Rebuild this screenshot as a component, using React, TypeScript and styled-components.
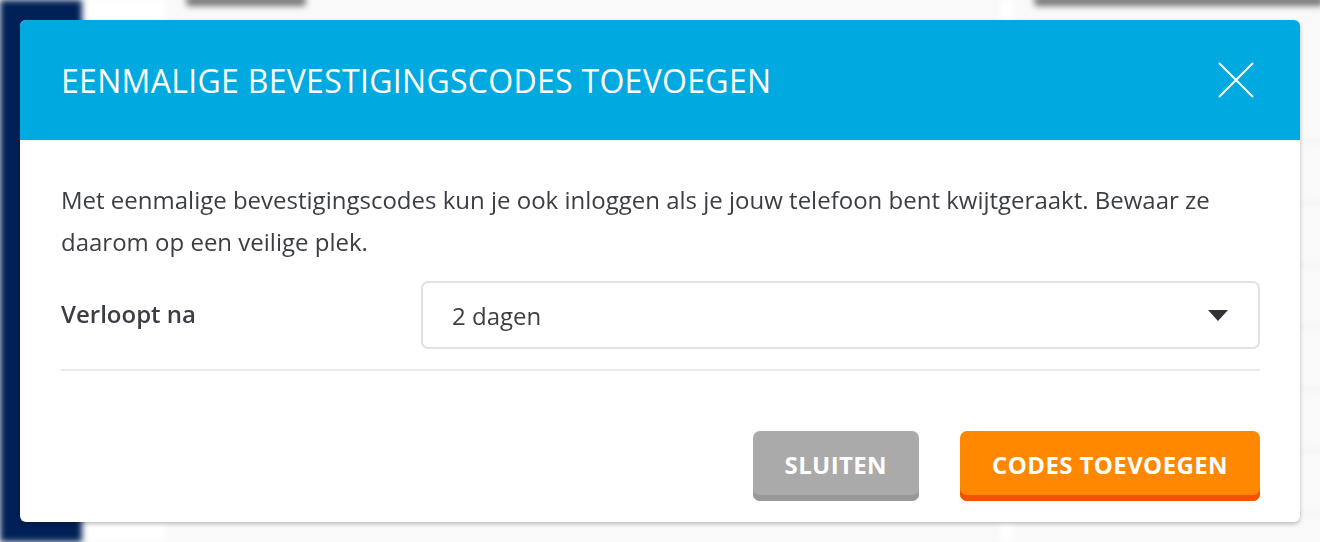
import React, { useState } from 'react';
import styled, { createGlobalStyle } from 'styled-components';

const GlobalStyle = createGlobalStyle`
  html, body {
    margin: 0;
    padding: 0;
    height: 100%;
    overflow: hidden;
  }
  body {
    font-family: 'Open Sans', 'Noto Sans', sans-serif;
    background: #f8f8f8;
  }
`;

const Page = styled.div`
  display: flex;
  height: 542px;
  filter: blur(3px);
`;

const Sidebar = styled.div`
  width: 82px;
  background: #002157;
  flex-shrink: 0;
`;

const Content = styled.div`
  flex: 1;
  display: flex;
  gap: 14px;
  padding-left: 84px;
  background: #fff;
`;

const Card = styled.div<{ $width: number }>`
  width: ${(p) => p.$width}px;
  background: #f9f9f9;
  display: flex;
  flex-direction: column;
`;

const CardRow = styled.div<{ $tall?: boolean }>`
  height: ${(p) => (p.$tall ? 140 : 60)}px;
  border-bottom: 2px solid #ececec;
  padding: 0 20px;
`;

const BlurText = styled.div<{ $width: number }>`
  width: ${(p) => p.$width}px;
  height: 10px;
  margin-top: -4px;
  background: #777;
  border-radius: 4px;
`;

const Overlay = styled.div`
  position: fixed;
  inset: 0;
  padding: 20px;
  display: flex;
  align-items: flex-start;
  justify-content: center;
`;

const Modal = styled.div`
  width: 1280px;
  background: #fff;
  border-radius: 6px;
  overflow: hidden;
  box-shadow: 0 2px 4px rgba(0, 0, 0, 0.25);
`;

const Header = styled.div`
  height: 120px;
  background: #00a9e0;
  display: flex;
  align-items: center;
  justify-content: space-between;
  padding: 0 46px 0 41px;
  box-sizing: border-box;
`;

const Title = styled.h2`
  margin: 0;
  color: #fff;
  font-size: 32px;
  font-weight: 500;
  letter-spacing: 0.3px;
  text-transform: uppercase;
`;

const CloseButton = styled.button`
  background: none;
  border: 0;
  padding: 0;
  width: 36px;
  height: 36px;
  cursor: pointer;
  display: flex;
`;

const Body = styled.div`
  padding: 39px 40px 21px 41px;
`;

const Intro = styled.p`
  margin: 0 0 18px;
  font-size: 24px;
  line-height: 42px;
  color: #3b3f44;
`;

const Field = styled.div`
  display: grid;
  grid-template-columns: 360px 1fr;
  align-items: center;
  padding-bottom: 20px;
  border-bottom: 2px solid #e9e9e9;
`;

const Label = styled.label`
  font-size: 24px;
  font-weight: 600;
  color: #3b3f44;
  margin-top: -4px;
`;

const Select = styled.div`
  height: 68px;
  box-sizing: border-box;
  border: 2px solid #e2e2e2;
  border-radius: 7px;
  display: flex;
  align-items: center;
  justify-content: space-between;
  padding: 0 30px 0 29px;
  font-size: 24px;
  color: #3b3f44;
  cursor: pointer;
`;

const Footer = styled.div`
  display: flex;
  justify-content: flex-end;
  gap: 41px;
  padding-top: 60px;
`;

const Button = styled.button<{ $variant: 'grey' | 'orange' }>`
  height: 70px;
  box-sizing: border-box;
  border: 0;
  border-radius: 7px;
  padding: 0 32px 4px;
  font-family: 'Open Sans', sans-serif;
  font-size: 24px;
  font-weight: 700;
  letter-spacing: 0.4px;
  color: #fff;
  text-transform: uppercase;
  cursor: pointer;
  background: ${(p) => (p.$variant === 'orange' ? '#ff8800' : '#aaaaaa')};
  box-shadow: inset 0 -6px 0
    ${(p) => (p.$variant === 'orange' ? '#f45200' : '#989898')};
`;

const options = ['1 dag', '2 dagen', '7 dagen', '30 dagen'];
const rows = [0, 1, 2, 3, 4, 5, 6];

export default function App() {
  const [expiry] = useState(options[1]);

  return (
    <>
      <GlobalStyle />
      <Page>
        <Sidebar />
        <Content>
          <Card $width={834}>
            {rows.map((i) => (
              <CardRow key={i} $tall={i === 0}>
                {i === 0 && <BlurText $width={120} />}
              </CardRow>
            ))}
          </Card>
          <Card $width={330}>
            {rows.map((i) => (
              <CardRow key={i} $tall={i === 0}>
                {i === 0 && <BlurText $width={290} />}
              </CardRow>
            ))}
          </Card>
        </Content>
      </Page>
      <Overlay>
        <Modal>
          <Header>
            <Title>Eenmalige bevestigingscodes toevoegen</Title>
            <CloseButton aria-label="Sluiten">
              <svg width="36" height="36" viewBox="0 0 36 36">
                <path
                  d="M1 1 L35 35 M35 1 L1 35"
                  stroke="#fff"
                  strokeWidth="2"
                  fill="none"
                />
              </svg>
            </CloseButton>
          </Header>
          <Body>
            <Intro>
              Met eenmalige bevestigingscodes kun je ook inloggen als je jouw
              telefoon bent kwijtgeraakt. Bewaar ze daarom op een veilige plek.
            </Intro>
            <Field>
              <Label>Verloopt na</Label>
              <Select>
                <span>{expiry}</span>
                <svg width="20" height="11" viewBox="0 0 20 11">
                  <path d="M0 0 H20 L10 11 Z" fill="#2f3236" />
                </svg>
              </Select>
            </Field>
            <Footer>
              <Button $variant="grey">Sluiten</Button>
              <Button $variant="orange">Codes toevoegen</Button>
            </Footer>
          </Body>
        </Modal>
      </Overlay>
    </>
  );
}
